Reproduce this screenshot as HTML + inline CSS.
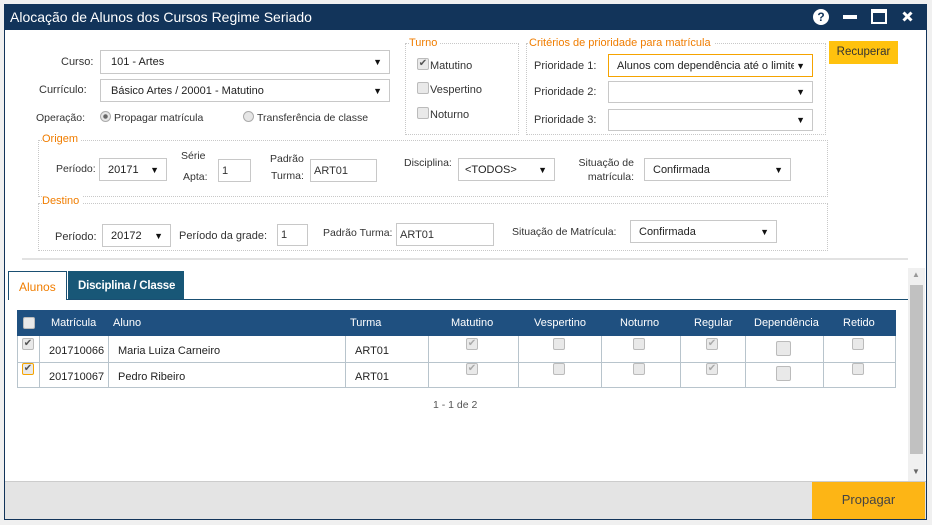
<!DOCTYPE html>
<html><head><meta charset="utf-8"><style>
*{box-sizing:border-box;margin:0;padding:0}
body{width:932px;height:525px;background:#f0f0f0;font-family:"Liberation Sans",sans-serif;font-size:11px;color:#333;position:relative;overflow:hidden}
.a{position:absolute;white-space:nowrap}
.win{left:4px;top:4px;width:923px;height:516px;background:#fff;border:1px solid #12345a}
.title{left:4px;top:4px;width:923px;height:26px;background:#12345a;color:#fff;font-size:14px;padding:5px 0 0 6px}
.sel{position:absolute;background:#fff;border:1px solid #c8c8c8;padding:0 0 0 10px;font-size:11px;color:#222;display:flex;align-items:center;white-space:nowrap;overflow:hidden}
.sel::after{content:"▼";position:absolute;right:7px;font-size:9px;color:#111;background:#fff;padding-left:2px}
.inp{position:absolute;background:#fff;border:1px solid #c8c8c8;font-size:11px;padding:0 3px;display:flex;align-items:center}
.fs{position:absolute;border:1px dotted #c8c8c8}
.lg{position:absolute;color:#f07d00;font-size:11px;background:#fff;padding-right:3px;white-space:nowrap}
.cb{position:absolute;width:12px;height:12px;border:1px solid #bbb;border-radius:2px;background:#e9e9e9;font-size:10px;line-height:10px;text-align:center;color:#555}
.th{position:absolute;top:310px;height:26px;color:#fff;font-size:11px;line-height:26px;white-space:nowrap}
.td{position:absolute;font-size:11px;color:#222}
.vl{position:absolute;top:336px;height:52px;width:1px;background:#b8c4cc}
</style></head><body>
<div class="a win"></div>
<div class="a title">Alocação de Alunos dos Cursos Regime Seriado</div>
<div class="a" style="left:813px;top:9px;width:16px;height:16px;border-radius:50%;background:#fff;color:#12345a;font-weight:bold;font-size:12px;text-align:center;line-height:16px">?</div>
<div class="a" style="left:843px;top:15px;width:14px;height:4px;background:#fff"></div>
<div class="a" style="left:871px;top:9px;width:16px;height:15px;border:2px solid #fff;border-top-width:4px"></div>
<svg class="a" style="left:902px;top:11px" width="11" height="11"><path d="M1.5 1.5L9.5 9.5M9.5 1.5L1.5 9.5" stroke="#fff" stroke-width="3"/></svg>

<div class="a" style="left:61px;top:56px">Curso:</div>
<div class="sel" style="left:100px;top:50px;width:290px;height:24px">101 - Artes</div>
<div class="a" style="left:39px;top:84px">Currículo:</div>
<div class="sel" style="left:100px;top:79px;width:290px;height:23px">Básico Artes / 20001 - Matutino</div>
<div class="a" style="left:36px;top:112px;font-size:10.5px">Operação:</div>
<div class="a" style="left:100px;top:111px;width:11px;height:11px;border-radius:50%;border:1px solid #aaa;background:radial-gradient(#666 30%,#e6e6e6 40%)"></div>
<div class="a" style="left:114px;top:112px;font-size:10.5px">Propagar matrícula</div>
<div class="a" style="left:243px;top:111px;width:11px;height:11px;border-radius:50%;border:1px solid #aaa;background:#e6e6e6"></div>
<div class="a" style="left:257px;top:112px;font-size:10.5px">Transferência de classe</div>

<div class="fs" style="left:405px;top:43px;width:114px;height:92px"></div>
<div class="lg" style="left:409px;top:37px">Turno</div>
<div class="cb" style="left:417px;top:58px">✔</div><div class="a" style="left:430px;top:60px">Matutino</div>
<div class="cb" style="left:417px;top:82px"></div><div class="a" style="left:430px;top:84px">Vespertino</div>
<div class="cb" style="left:417px;top:107px"></div><div class="a" style="left:430px;top:109px">Noturno</div>

<div class="fs" style="left:526px;top:43px;width:300px;height:92px"></div>
<div class="lg" style="left:529px;top:37px">Critérios de prioridade para matrícula</div>
<div class="a" style="left:534px;top:60px">Prioridade 1:</div>
<div class="sel" style="left:608px;top:54px;width:205px;height:23px;border-color:#f5a300;padding-left:8px">Alunos com dependência até o limite</div>
<div class="a" style="left:534px;top:86px">Prioridade 2:</div>
<div class="sel" style="left:608px;top:81px;width:205px;height:22px"></div>
<div class="a" style="left:534px;top:114px">Prioridade 3:</div>
<div class="sel" style="left:608px;top:109px;width:205px;height:22px"></div>
<div class="a" style="left:829px;top:41px;width:69px;height:23px;background:#ffc20e;font-size:11.5px;text-align:center;line-height:23px">Recuperar</div>

<div class="fs" style="left:38px;top:140px;width:790px;height:57px"></div>
<div class="lg" style="left:42px;top:133px">Origem</div>
<div class="a" style="left:56px;top:163px;font-size:10.5px">Período:</div>
<div class="sel" style="left:99px;top:158px;width:68px;height:23px;padding-left:8px">20171</div>
<div class="a" style="left:181px;top:150px;font-size:10.5px">Série</div><div class="a" style="left:183px;top:171px;font-size:10.5px">Apta:</div>
<div class="inp" style="left:218px;top:159px;width:33px;height:23px">1</div>
<div class="a" style="left:270px;top:153px;font-size:10.5px">Padrão</div><div class="a" style="left:271px;top:170px;font-size:10.5px">Turma:</div>
<div class="inp" style="left:310px;top:159px;width:67px;height:23px">ART01</div>
<div class="a" style="left:404px;top:157px;font-size:10.5px">Disciplina:</div>
<div class="sel" style="left:458px;top:158px;width:97px;height:23px;padding-left:6px">&lt;TODOS&gt;</div>
<div class="a" style="left:570px;top:156px;width:64px;text-align:right;line-height:14px;font-size:10.5px;white-space:normal">Situação de<br>matrícula:</div>
<div class="sel" style="left:644px;top:158px;width:147px;height:23px;padding-left:8px">Confirmada</div>

<div class="fs" style="left:38px;top:203px;width:790px;height:48px"></div>
<div class="lg" style="left:42px;top:195px">Destino</div>
<div class="a" style="left:55px;top:231px">Período:</div>
<div class="sel" style="left:102px;top:224px;width:69px;height:23px;padding-left:8px">20172</div>
<div class="a" style="left:179px;top:230px">Período da grade:</div>
<div class="inp" style="left:277px;top:224px;width:31px;height:22px">1</div>
<div class="a" style="left:323px;top:227px;font-size:10.5px">Padrão Turma:</div>
<div class="inp" style="left:396px;top:223px;width:98px;height:23px">ART01</div>
<div class="a" style="left:512px;top:226px;font-size:10.5px">Situação de Matrícula:</div>
<div class="sel" style="left:630px;top:220px;width:147px;height:23px;padding-left:8px">Confirmada</div>

<div class="a" style="left:22px;top:258px;width:886px;height:2px;background:#e2e2e2"></div>

<div class="a" style="left:8px;top:271px;width:59px;height:29px;border:1px solid #1a4f72;border-bottom:none;background:#fff;color:#f07d00;font-size:12px;padding:8px 0 0 10px">Alunos</div>
<div class="a" style="left:68px;top:271px;width:116px;height:28px;background:#185777;color:#fff;font-size:11.5px;font-weight:bold;padding:9px 0 0 10px;letter-spacing:-0.2px">Disciplina / Classe</div>
<div class="a" style="left:66px;top:299px;width:842px;height:1px;background:#1a4f72"></div>

<div class="a" style="left:17px;top:310px;width:879px;height:26px;background:#1f5080"></div>
<div class="a" style="left:17px;top:336px;width:879px;height:52px;border:1px solid #b8c4cc;border-top:none"></div>
<div class="a" style="left:17px;top:362px;width:879px;height:1px;background:#b8c4cc"></div>
<div class="vl" style="left:39px"></div><div class="vl" style="left:108px"></div><div class="vl" style="left:345px"></div><div class="vl" style="left:428px"></div><div class="vl" style="left:518px"></div><div class="vl" style="left:601px"></div><div class="vl" style="left:680px"></div><div class="vl" style="left:745px"></div><div class="vl" style="left:823px"></div>
<div class="cb" style="left:23px;top:317px"></div>
<div class="th" style="left:51px">Matrícula</div><div class="th" style="left:113px">Aluno</div><div class="th" style="left:350px">Turma</div><div class="th" style="left:451px">Matutino</div><div class="th" style="left:534px">Vespertino</div><div class="th" style="left:620px">Noturno</div><div class="th" style="left:694px">Regular</div><div class="th" style="left:754px">Dependência</div><div class="th" style="left:843px">Retido</div>
<div class="cb" style="left:22px;top:338px">✔</div>
<div class="cb" style="left:22px;top:363px;border-color:#f5a300">✔</div>
<div class="td" style="left:49px;top:345px">201710066</div><div class="td" style="left:118px;top:345px">Maria Luiza Carneiro</div><div class="td" style="left:355px;top:345px">ART01</div>
<div class="td" style="left:49px;top:371px">201710067</div><div class="td" style="left:118px;top:371px">Pedro Ribeiro</div><div class="td" style="left:355px;top:371px">ART01</div>
<div class="cb" style="left:466px;top:338px;color:#aaa">✔</div><div class="cb" style="left:553px;top:338px"></div><div class="cb" style="left:633px;top:338px"></div><div class="cb" style="left:706px;top:338px;color:#aaa">✔</div><div class="cb" style="left:776px;top:341px;width:15px;height:15px"></div><div class="cb" style="left:852px;top:338px"></div>
<div class="cb" style="left:466px;top:363px;color:#aaa">✔</div><div class="cb" style="left:553px;top:363px"></div><div class="cb" style="left:633px;top:363px"></div><div class="cb" style="left:706px;top:363px;color:#aaa">✔</div><div class="cb" style="left:776px;top:366px;width:15px;height:15px"></div><div class="cb" style="left:852px;top:363px"></div>
<div class="a" style="left:433px;top:399px;color:#555;font-size:10.5px">1 - 1 de 2</div>

<div class="a" style="left:908px;top:268px;width:17px;height:213px;background:#f0f0f0"></div>
<div class="a" style="left:910px;top:285px;width:13px;height:169px;background:#c1c1c1"></div>
<div class="a" style="left:912px;top:270px;font-size:8px;color:#999">▲</div>
<div class="a" style="left:912px;top:467px;font-size:8px;color:#666">▼</div>

<div class="a" style="left:5px;top:481px;width:921px;height:38px;background:#e4e4e4;border-top:1px solid #ccc"></div>
<div class="a" style="left:812px;top:482px;width:113px;height:37px;background:#fdb515;font-size:13px;color:#444;text-align:center;line-height:36px">Propagar</div>
</body></html>
